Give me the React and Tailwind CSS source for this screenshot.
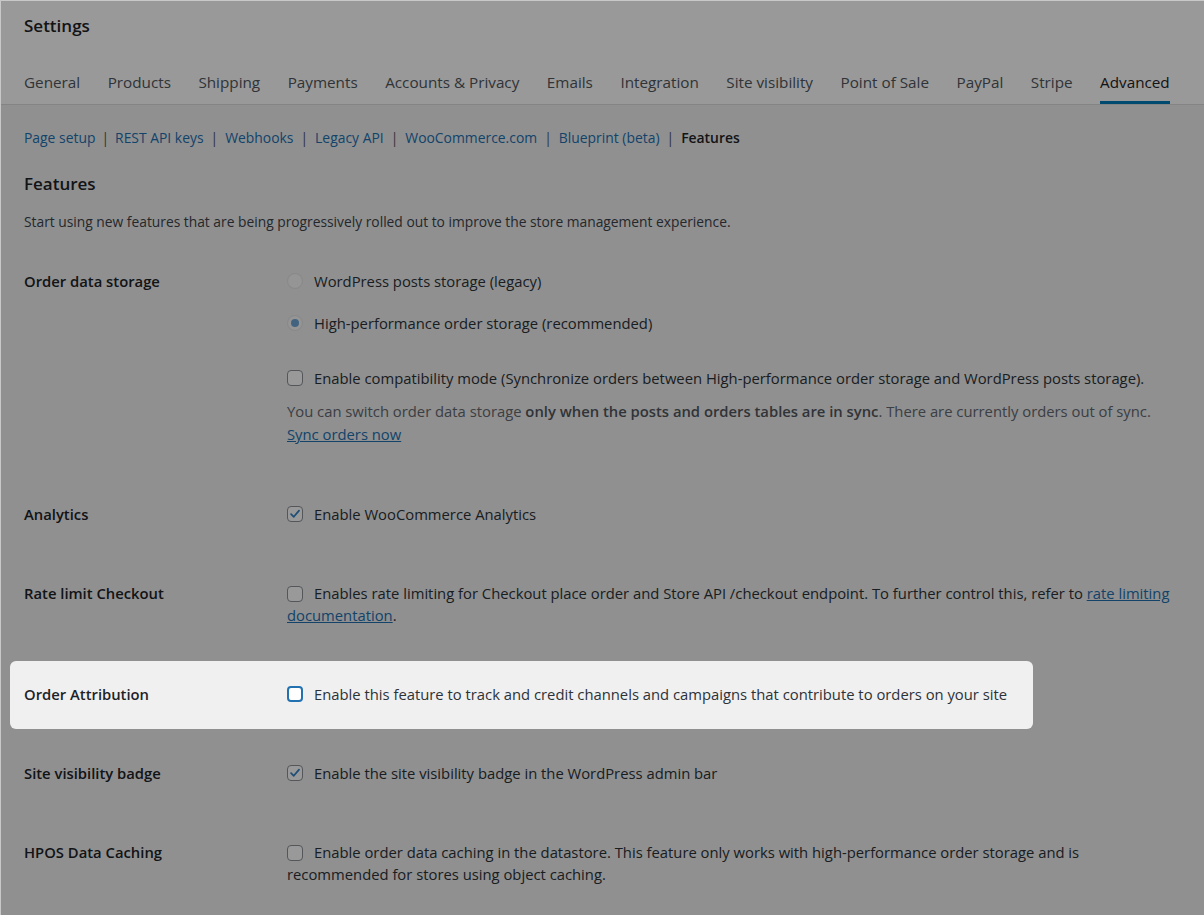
import React from 'react'

const tabs = [
  'General',
  'Products',
  'Shipping',
  'Payments',
  'Accounts & Privacy',
  'Emails',
  'Integration',
  'Site visibility',
  'Point of Sale',
  'PayPal',
  'Stripe',
  'Advanced',
]

const sections = ['Page setup', 'REST API keys', 'Webhooks', 'Legacy API', 'WooCommerce.com', 'Blueprint (beta)']

function Checkbox({ checked, focused }) {
  return (
    <span
      className={
        'mt-[3px] flex h-4 w-4 shrink-0 items-center justify-center rounded-[4px] bg-white ' +
        (focused ? 'border-2 border-[#2271b1]' : 'border border-[#8c8f94]')
      }
    >
      {checked && (
        <svg viewBox="0 0 16 16" className="h-[14px] w-[14px]">
          <path d="M3.5 8.2 L6.6 11.2 L12.6 4.2" fill="none" stroke="#3582c4" strokeWidth="2" strokeLinecap="round" strokeLinejoin="round" />
        </svg>
      )}
    </span>
  )
}

function Radio({ checked }) {
  return (
    <span className="mt-[3px] flex h-4 w-4 shrink-0 items-center justify-center rounded-full border border-[#dcdcde]/75 bg-white/50">
      {checked && <span className="h-2 w-2 rounded-full bg-[#3582c4]/70" />}
    </span>
  )
}

function Row({ label, children }) {
  return (
    <div className="flex items-start pt-[29px] pb-[28px]">
      <div className="w-[263px] shrink-0 text-[14.8px] font-semibold leading-[22px] text-[#1d2327]">{label}</div>
      <div className="flex-1 text-[14.8px] leading-[22px] text-[#2c3338]">{children}</div>
    </div>
  )
}

function Option({ control, children }) {
  return (
    <div className="flex items-start gap-[11px]">
      {control}
      <span>{children}</span>
    </div>
  )
}

export default function App() {
  return (
    <div
      className="relative min-h-[915px] bg-[#f0f0f1] text-[#1d2327]"
      style={{ fontFamily: '"Open Sans", "Noto Sans", sans-serif' }}
    >
      {/* Header with tabs */}
      <header className="border-b border-[#dcdcde] bg-white px-6 pt-[14px]">
        <h1 className="text-[17px] font-semibold leading-6">Settings</h1>
        <nav className="mt-[34px] flex gap-[27.5px]">
          {tabs.map((t) => (
            <a
              key={t}
              className={
                'border-b-[3px] pb-[9px] text-[15.25px] font-medium leading-5 ' +
                (t === 'Advanced' ? 'border-[#007cba] text-[#1d2327]' : 'border-transparent text-[#50575e]')
              }
            >
              {t}
            </a>
          ))}
        </nav>
      </header>

      <main className="px-6 pt-[23px]">
        {/* Sub sections */}
        <ul className="flex text-[13.9px] leading-5">
          {sections.map((s, i) => (
            <li key={s} className="flex">
              <a className="text-[#2271b1]">{s}</a>
              <span className={(i === 0 ? 'mx-[6px]' : 'mx-[7px]') + ' text-[#50575e]'}>|</span>
            </li>
          ))}
          <li className="font-semibold text-[#1d2327]">Features</li>
        </ul>

        <h2 className="mt-6 text-[17px] font-semibold leading-6">Features</h2>
        <p className="mt-4 text-[13.8px] leading-5 text-[#3c434a]">
          Start using new features that are being progressively rolled out to improve the store management experience.
        </p>

        <div className="mt-[9px]">
          <Row label="Order data storage">
            <div className="flex flex-col">
              <Option control={<Radio />}>WordPress posts storage (legacy)</Option>
              <div className="mt-5">
                <Option control={<Radio checked />}>High-performance order storage (recommended)</Option>
              </div>
              <div className="mt-[33px]">
                <Option control={<Checkbox />}>
                  Enable compatibility mode (Synchronize orders between High-performance order storage and WordPress posts storage).
                </Option>
              </div>
              <p className="mt-[11px] leading-[23px] text-[#646970]">
                You can switch order data storage <strong className="font-semibold text-[#50575e]">only when the posts and orders tables are in sync</strong>. There are
                currently orders out of sync.
                <br />
                <a className="text-[#2271b1] underline">Sync orders now</a>
              </p>
            </div>
          </Row>

          <Row label="Analytics">
            <Option control={<Checkbox checked />}>Enable WooCommerce Analytics</Option>
          </Row>

          <Row label="Rate limit Checkout">
            <p>
              <span className="mr-[11px] inline-flex align-[-3px]">
                <Checkbox />
              </span>
              Enables rate limiting for Checkout place order and Store API /checkout endpoint. To further control this, refer to{' '}
              <a className="text-[#2271b1] underline">rate limiting documentation</a>.
            </p>
          </Row>

          {/* Highlighted row, sits above the dim layer */}
          <div className="relative z-20 -ml-[14px] mt-[7px] mb-1 flex w-[1023px] items-start rounded-md bg-[#f0f0f1] pt-[22px] pb-6 pl-[14px]">
            <div className="w-[263px] shrink-0 text-[14.8px] font-semibold leading-[22px] text-[#1d2327]">Order Attribution</div>
            <div className="text-[14.8px] leading-[22px] text-[#2c3338]">
              <Option control={<Checkbox focused />}>
                Enable this feature to track and credit channels and campaigns that contribute to orders on your site
              </Option>
            </div>
          </div>

          <Row label="Site visibility badge">
            <Option control={<Checkbox checked />}>Enable the site visibility badge in the WordPress admin bar</Option>
          </Row>

          <Row label="HPOS Data Caching">
            <p>
              <span className="mr-[11px] inline-flex align-[-3px]">
                <Checkbox />
              </span>
              Enable order data caching in the datastore. This feature only works with high-performance order storage and is
              recommended for stores using object caching.
            </p>
          </Row>
        </div>
      </main>

      {/* Dim layer */}
      <div className="pointer-events-none absolute inset-0 z-10 bg-black/40" />
      <div className="pointer-events-none absolute inset-0 z-30 border-l border-t border-[#c8c8c8]" />
    </div>
  )
}
